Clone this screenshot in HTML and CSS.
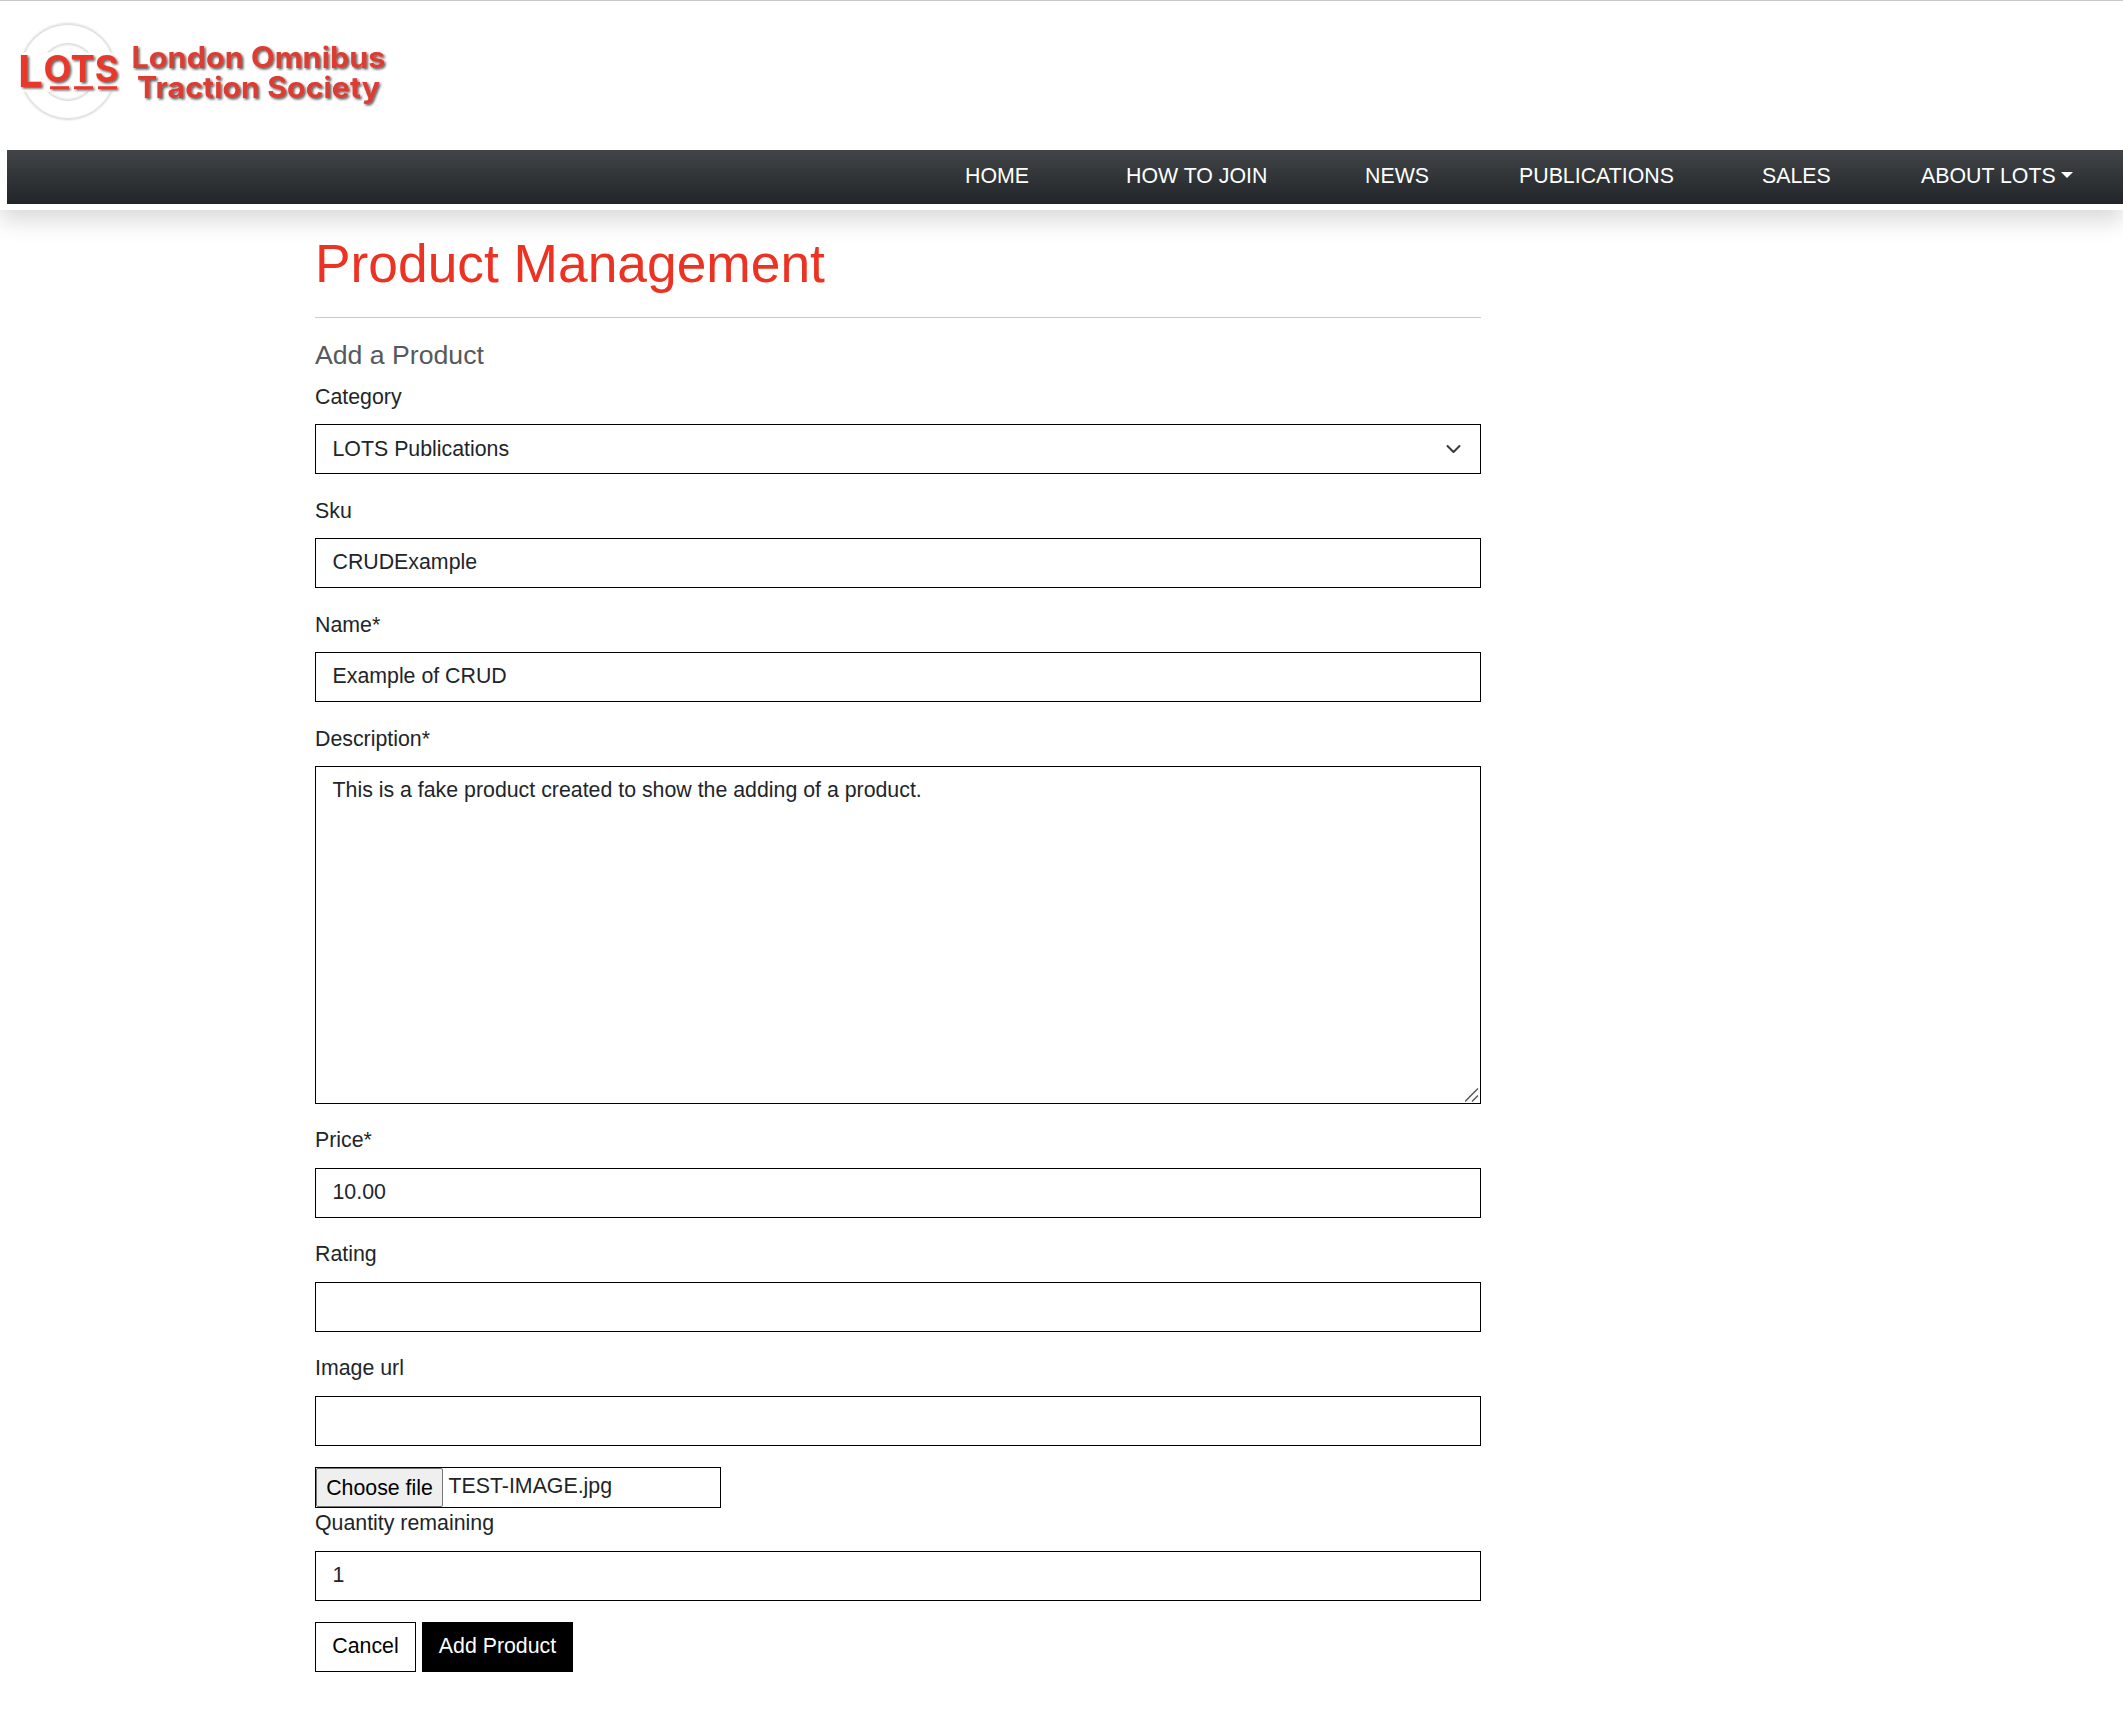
FILE: index.html
```html
<!DOCTYPE html>
<html lang="en">
<head>
<meta charset="utf-8">
<title>London Omnibus Traction Society</title>
<link rel="stylesheet" href="styles.css">
</head>
<body>
<header class="header">
  <a class="logo" href="#">
    <svg width="400" height="130" viewBox="0 0 400 130" role="img" aria-label="LOTS logo">
      <defs>
        <filter id="ringShadow" x="-20%" y="-20%" width="140%" height="140%"><feDropShadow dx="0" dy="0" stdDeviation="1.8" flood-color="#000" flood-opacity=".32"/></filter>
        <filter id="textShadow" x="-10%" y="-20%" width="120%" height="150%"><feDropShadow dx="1.5" dy="1.5" stdDeviation="1.1" flood-color="#000" flood-opacity=".65"/></filter>
      </defs>
      <path class="ring" filter="url(#ringShadow)" fill-rule="evenodd" d="M68 24.500a47 47 0 1 1 0 94a47 47 0 1 1 0-94zM68 43.500a28.500 28.500 0 1 0 0 57a28.500 28.500 0 1 0 0-57z"/>
      <rect class="band" x="17" y="52.500" width="102" height="39"/>
      <g class="logo-red" filter="url(#textShadow)">
        <text x="18" y="86.500" font-size="43.500" textLength="25" lengthAdjust="spacingAndGlyphs">L</text>
        <text x="43.500" y="81.500" font-size="36.500" textLength="75" lengthAdjust="spacingAndGlyphs">OTS</text>
        <path d="M50 86.300h19v2.700h-19zM74 86.300h19v2.700h-19zM98 86.300h19v2.700h-19z"/>
      </g>
      <text class="logo-name" filter="url(#textShadow)" font-size="29.500"><tspan x="131.500" y="68.300" textLength="254" lengthAdjust="spacingAndGlyphs">London Omnibus</tspan><tspan x="137" y="98.300" textLength="243" lengthAdjust="spacingAndGlyphs">Traction Society</tspan></text>
    </svg>
  </a>
  <nav class="nav">
    <a class="nav-item home" href="#">HOME</a>
    <a class="nav-item join" href="#">HOW TO JOIN</a>
    <a class="nav-item news" href="#">NEWS</a>
    <a class="nav-item publications" href="#">PUBLICATIONS</a>
    <a class="nav-item sales" href="#">SALES</a>
    <a class="nav-item about" href="#">ABOUT LOTS<span class="caret"></span></a>
  </nav>
</header>
<main class="content">
  <h1 class="title">Product Management</h1>
  <hr class="rule">
  <h5 class="subtitle">Add a Product</h5>
  <form class="form">
    <div class="field">
      <label class="label" for="category">Category</label>
      <div class="control-wrap">
        <select class="control" id="category"><option>LOTS Publications</option></select>
        <svg class="chevron" width="21" height="16" viewBox="0 0 16 16" preserveAspectRatio="xMidYMid meet"><path d="m2 5 6 6 6-6"/></svg>
      </div>
    </div>
    <div class="field">
      <label class="label" for="sku">Sku</label>
      <input class="control" id="sku" type="text" value="CRUDExample">
    </div>
    <div class="field">
      <label class="label" for="name">Name*</label>
      <input class="control" id="name" type="text" value="Example of CRUD">
    </div>
    <div class="field">
      <label class="label" for="description">Description*</label>
      <div class="control-wrap">
        <textarea class="control area" id="description">This is a fake product created to show the adding of a product.</textarea>
        <svg class="grip" width="14" height="14" viewBox="0 0 14 14"><path d="M0 13.500 13 .5M7 13.500l6-6"/></svg>
      </div>
    </div>
    <div class="field">
      <label class="label" for="price">Price*</label>
      <input class="control" id="price" type="text" value="10.00">
    </div>
    <div class="field">
      <label class="label" for="rating">Rating</label>
      <input class="control" id="rating" type="text">
    </div>
    <div class="field">
      <label class="label" for="url">Image url</label>
      <input class="control" id="url" type="text">
    </div>
    <div class="file">
      <button class="file-button" type="button">Choose file</button>
      <span class="file-name">TEST-IMAGE.jpg</span>
    </div>
    <div class="field">
      <label class="label" for="quantity">Quantity remaining</label>
      <input class="control" id="quantity" type="text" value="1">
    </div>
    <div class="actions">
      <a class="btn" href="#">Cancel</a>
      <button class="btn btn-dark" type="button">Add Product</button>
    </div>
  </form>
</main>
</body>
</html>
```
FILE: styles.css
```css
* { box-sizing: border-box; }

body {
  margin: 0;
  background: #fff;
  color: #212529;
  font: 21.33px/32px "Liberation Sans", Arial, sans-serif;
  overflow: hidden;
}

a { color: inherit; text-decoration: none; }
svg { display: block; }

.header {
  height: 210px;
  border-top: 1px solid #c8c8c8;
  padding-left: 7px;
  background: #fff;
  box-shadow: 0 10.6px 21.2px rgba(0, 0, 0, .15);
}

.logo { display: flow-root; height: 149px; margin-left: -7px; }
.logo svg { margin-top: -1px; }
.ring { fill: #fff; stroke: #d6d6d6; stroke-width: .7; }
.band { fill: #fff; }
.logo-red { fill: #e8372b; font-family: Inter, sans-serif; font-weight: 700; }
.logo-name { fill: #dc3c32; font-family: Inter, sans-serif; font-weight: 700; }

.nav {
  display: flex;
  align-items: center;
  height: 54px;
  padding: 0 0 3px 958px;
  background: linear-gradient(#434548, #313538 50%, #212429);
  color: #fff;
  white-space: nowrap;
}
.nav-item { flex: none; }
.home { width: 161px; }
.join { width: 239px; }
.news { width: 154px; }
.publications { width: 243px; }
.sales { width: 159px; }
.caret {
  display: inline-block;
  margin-left: 5px;
  vertical-align: 5px;
  border: 6px solid transparent;
  border-top-color: #fff;
  border-bottom: 0;
}

.content { width: 1166px; margin-left: 315px; padding-top: 22px; }
.title {
  margin: 0;
  color: #ec3323;
  font-size: 53.33px;
  font-weight: 400;
  line-height: 64px;
}
.rule { margin: 21px 0; border: 0; border-top: 1px solid #c8c9ca; }
.subtitle {
  margin: 0 0 10.9px;
  color: #54595d;
  font-size: 26.67px;
  font-weight: 400;
  line-height: 32px;
}

.field { display: flex; flex-direction: column; margin-bottom: 21.3px; }
.label { display: block; height: 32px; margin-bottom: 10.6px; line-height: 30px; }
.control-wrap { position: relative; }
.control {
  display: block;
  width: 100%;
  height: 50px;
  margin: 0;
  padding: 7px 16.500px 8px;
  border: 1px solid #000;
  border-radius: 0;
  background: #fff;
  color: #212529;
  font: inherit;
  appearance: none;
  outline: 0;
}
.area { height: 338px; resize: none; overflow: hidden; }
.chevron {
  position: absolute;
  right: 17px;
  top: 17px;
  fill: none;
  stroke: #343a40;
  stroke-width: 2;
  stroke-linecap: round;
  stroke-linejoin: round;
}
.grip { position: absolute; right: 2px; bottom: 2px; fill: none; stroke: #555; stroke-width: 1.4; }

.file {
  display: flex;
  width: 406px;
  height: 41px;
  border: 1px solid #000;
}
.file-button {
  width: 127px;
  height: 39px;
  padding: 0;
  border: 1px solid #767676;
  border-radius: 2px;
  background: #efefef;
  color: #000;
  font: inherit;
}
.file-name { margin-left: 5.500px; line-height: 36px; }

.actions { display: flex; gap: 6px; }
.btn {
  width: 101px;
  height: 50px;
  padding: 0 0 1px;
  border: 1px solid #000;
  background: #fff;
  color: #000;
  font: inherit;
  line-height: 47px;
  text-align: center;
}
.btn-dark { width: 151px; background: #000; color: #fff; }
```
